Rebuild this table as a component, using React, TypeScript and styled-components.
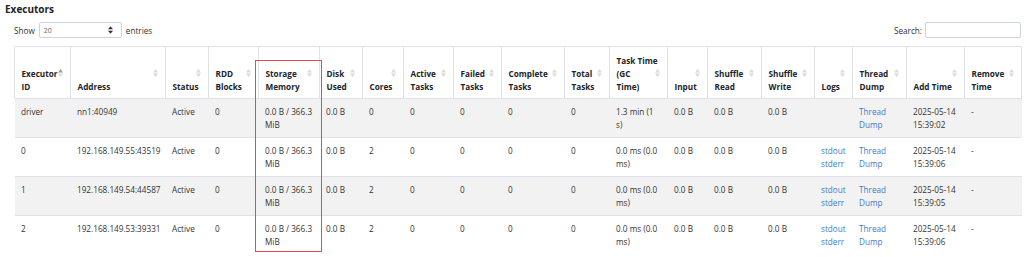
import styled, {createGlobalStyle} from 'styled-components'

type SortDir = 'none' | 'asc'

interface IColumn {
  label: string
  w: number
  sort?: SortDir
}

interface IExecutor {
  id: string
  address: string
  cores: string
  taskTime: string
  logs: boolean
  addTime: string
}

const columns: IColumn[] = [
  {label: 'Executor\nID', w: 56, sort: 'asc'},
  {label: 'Address', w: 95},
  {label: 'Status', w: 43},
  {label: 'RDD\nBlocks', w: 50},
  {label: 'Storage\nMemory', w: 61},
  {label: 'Disk\nUsed', w: 43},
  {label: 'Cores', w: 41},
  {label: 'Active\nTasks', w: 50},
  {label: 'Failed\nTasks', w: 48},
  {label: 'Complete\nTasks', w: 63},
  {label: 'Total\nTasks', w: 45},
  {label: 'Task Time\n(GC\nTime)', w: 58},
  {label: 'Input', w: 40},
  {label: 'Shuffle\nRead', w: 54},
  {label: 'Shuffle\nWrite', w: 53},
  {label: 'Logs', w: 38},
  {label: 'Thread\nDump', w: 54},
  {label: 'Add Time', w: 58},
  {label: 'Remove\nTime', w: 57},
]

const executors: IExecutor[] = [
  {id: 'driver', address: 'nn1:40949', cores: '0', taskTime: '1.3 min (1\ns)', logs: false, addTime: '2025-05-14\n15:39:02'},
  {id: '0', address: '192.168.149.55:43519', cores: '2', taskTime: '0.0 ms (0.0\nms)', logs: true, addTime: '2025-05-14\n15:39:06'},
  {id: '1', address: '192.168.149.54:44587', cores: '2', taskTime: '0.0 ms (0.0\nms)', logs: true, addTime: '2025-05-14\n15:39:05'},
  {id: '2', address: '192.168.149.53:39331', cores: '2', taskTime: '0.0 ms (0.0\nms)', logs: true, addTime: '2025-05-14\n15:39:06'},
]

function SortIcon({dir}: {dir: SortDir}) {
  return (
    <SortMark width="5" height="9" viewBox="0 0 5 9">
      <polygon points="0,4 2.5,0.5 5,4" fill={dir === 'asc' ? '#9c9c9c' : '#dadada'} />
      <polygon points="0,5 2.5,8.5 5,5" fill="#dadada" />
    </SortMark>
  )
}

function App() {
  return (
    <Page>
      <GlobalStyle />
      <Title>Executors</Title>
      <Content>
        <Controls>
          <Label>
            Show
            <Select>
              <span>20</span>
              <svg width="5" height="8" viewBox="0 0 5 8">
                <polygon points="0,3.2 2.5,0.3 5,3.2" fill="#333" />
                <polygon points="0,4.8 2.5,7.7 5,4.8" fill="#333" />
              </svg>
            </Select>
            entries
          </Label>
          <Label>
            Search:
            <SearchBox />
          </Label>
        </Controls>
        <TableWrap>
          <Table>
            <thead>
              <tr>
                {columns.map(c => (
                  <Th key={c.label} $w={c.w}>
                    {c.label}
                    <SortIcon dir={c.sort ?? 'none'} />
                  </Th>
                ))}
              </tr>
            </thead>
            <tbody>
              {executors.map(e => (
                <Row key={e.id}>
                  <Td>{e.id}</Td>
                  <Td>{e.address}</Td>
                  <Td>Active</Td>
                  <Td>0</Td>
                  <Td>{'0.0 B / 366.3\nMiB'}</Td>
                  <Td>0.0 B</Td>
                  <Td>{e.cores}</Td>
                  <Td>0</Td>
                  <Td>0</Td>
                  <Td>0</Td>
                  <Td>0</Td>
                  <Td>{e.taskTime}</Td>
                  <Td>0.0 B</Td>
                  <Td>0.0 B</Td>
                  <Td>0.0 B</Td>
                  <Td>
                    {e.logs && (
                      <>
                        <Link href="#">stdout</Link>
                        <Link href="#">stderr</Link>
                      </>
                    )}
                  </Td>
                  <Td>
                    <Link href="#">{'Thread\nDump'}</Link>
                  </Td>
                  <Td>{e.addTime}</Td>
                  <Td>-</Td>
                </Row>
              ))}
            </tbody>
          </Table>
          <Highlight />
        </TableWrap>
      </Content>
    </Page>
  )
}

export default App

const GlobalStyle = createGlobalStyle`
  body {
    margin: 0;
    background: #fff;
    color: #212529;
    font-family: 'Open Sans', 'Noto Sans', sans-serif;
  }
`

const Page = styled.div`
  padding: 2px 3px 0 5px;
`

const Title = styled.h4`
  margin: 0;
  font-size: 10px;
  line-height: 14px;
  font-weight: 700;
`

const Content = styled.div`
  padding-left: 9px;
`

const Controls = styled.div`
  display: flex;
  justify-content: space-between;
  align-items: center;
  height: 16px;
  margin-top: 6px;
  font-size: 8.2px;
  color: #333;
`

const Label = styled.div`
  display: flex;
  align-items: center;
  gap: 4px;
`

const Select = styled.div`
  box-sizing: border-box;
  width: 83px;
  height: 16px;
  display: flex;
  align-items: center;
  justify-content: space-between;
  padding: 0 8px 0 4px;
  border: 1px solid #ced4da;
  border-radius: 2px;
  font-size: 7px;
  color: #666;
`

const SearchBox = styled.div`
  box-sizing: border-box;
  width: 96px;
  height: 16px;
  border: 1px solid #ced4da;
  border-radius: 2px;
  margin-left: -1px;
`

const TableWrap = styled.div`
  position: relative;
  margin-top: 8px;
`

const Table = styled.table`
  width: 1007px;
  border-collapse: collapse;
  table-layout: fixed;
  font-size: 8.2px;
  line-height: 13px;
`

const Th = styled.th<{$w: number}>`
  position: relative;
  box-sizing: border-box;
  width: ${p => p.$w}px;
  padding: 7px 10px 5px 6.5px;
  border: 1px solid #dee2e6;
  text-align: left;
  vertical-align: bottom;
  font-weight: 700;
  white-space: pre;
`

const SortMark = styled.svg`
  position: absolute;
  right: 7px;
  top: 50%;
  transform: translateY(-50%);
`

const Row = styled.tr`
  &:nth-child(odd) {
    background: #f2f2f2;
  }
`

const Td = styled.td`
  padding: 6px 3px 6px 6.5px;
  border-top: 1px solid #dee2e6;
  vertical-align: top;
  white-space: pre;
  color: #333;
`

const Link = styled.a`
  display: block;
  color: #3a7dc9;
  text-decoration: none;
`

const Highlight = styled.div`
  position: absolute;
  left: 241px;
  top: 14px;
  width: 67px;
  height: 192px;
  box-sizing: border-box;
  border: 1.5px solid #e5484d;
  pointer-events: none;
`
